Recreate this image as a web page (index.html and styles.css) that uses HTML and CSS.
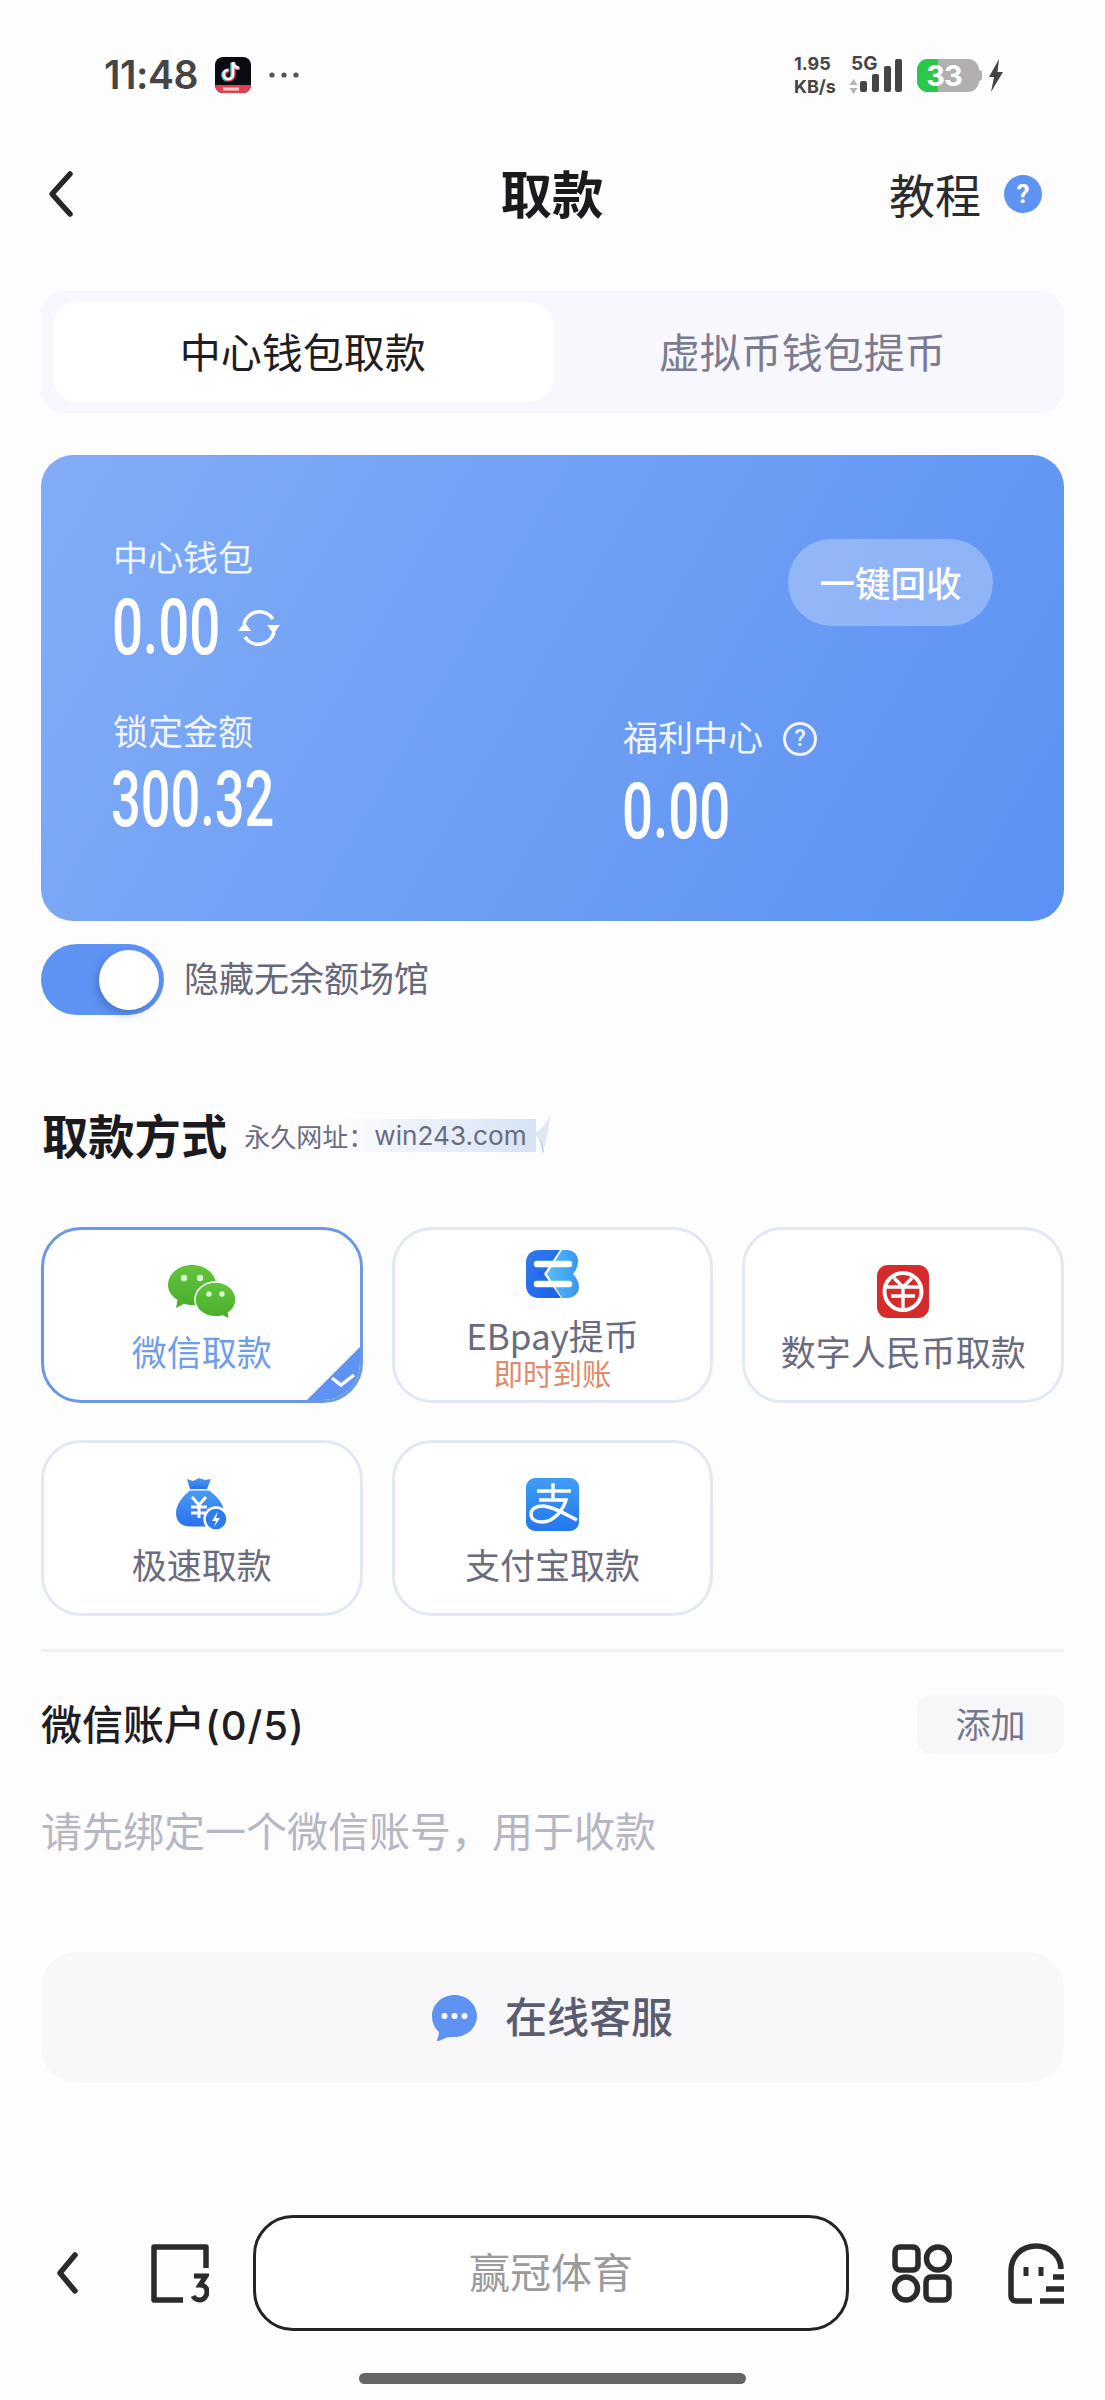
FILE: index.html
```html
<!DOCTYPE html>
<html lang="zh-CN">
<head>
<meta charset="utf-8">
<title>取款</title>
<link rel="stylesheet" href="styles.css">
</head>
<body>
<div class="page">
  <header class="status">
    <div class="status-left">
      <span class="time">11:48</span>
      <svg class="tiktok" viewBox="0 0 36 36"><defs><clipPath id="tk"><rect width="36" height="36" rx="8"/></clipPath></defs><g clip-path="url(#tk)"><rect width="36" height="36" fill="#0b0b12"/><rect y="28" width="36" height="8" fill="#e0404f"/><rect x="8" y="30.5" width="16" height="3" fill="#f7c9c9"/></g><g fill="none" stroke-width="3.4"><path d="M18 5v12.5a4.6 4.6 0 1 1-4.6-4.6M18 5c.4 3.4 2.8 5.600 6 6" stroke="#2ad4dc" transform="translate(-1 .6)"/><path d="M18 5v12.5a4.6 4.6 0 1 1-4.6-4.6M18 5c.4 3.4 2.8 5.600 6 6" stroke="#f0305a" transform="translate(1 .6)"/><path d="M18 5v12.5a4.6 4.6 0 1 1-4.6-4.6M18 5c.4 3.4 2.8 5.600 6 6" stroke="#fff" stroke-width="2.6"/></g></svg>
      <svg class="dots" viewBox="0 0 30 6"><circle cx="3" cy="3" r="2.6"/><circle cx="15" cy="3" r="2.6"/><circle cx="27" cy="3" r="2.6"/></svg>
    </div>
    <div class="status-right">
      <div class="net"><span>1.95</span><span class="net-5g">5G</span><span>KB/s</span><svg class="updown" viewBox="0 0 9 15"><path d="M4.500 0l4 6H.5zM4.500 15l4-6H.5z"/></svg></div>
      <svg class="signal" viewBox="0 0 42 33"><rect x="0" y="22" width="7" height="11" rx="2"/><rect x="12" y="15" width="7" height="18" rx="2"/><rect x="24" y="7" width="7" height="26" rx="2"/><rect x="35" y="0" width="7" height="33" rx="2"/></svg>
      <div class="battery"><div class="battery-level"></div><span class="battery-num">33</span></div>
      <svg class="bolt" viewBox="0 0 15 33"><path d="M11 0L1 18h5l-3 15L15 13H9.500z"/></svg>
    </div>
  </header>

  <nav class="nav">
    <svg class="nav-back" viewBox="0 0 27 48"><path d="M23 4L5 24l18 20" /></svg>
    <h1 class="nav-title">取款</h1>
    <div class="nav-help"><span class="nav-help-text">教程</span><span class="q-badge">?</span></div>
  </nav>

  <div class="tabs">
    <div class="tab tab-active">中心钱包取款</div>
    <div class="tab">虚拟币钱包提币</div>
  </div>

  <section class="wallet">
    <div class="wallet-cell">
      <div class="wallet-label">中心钱包</div>
      <div class="value-row">
        <span class="num num-short">0.00</span>
        <svg class="refresh" viewBox="0 0 44 44"><path d="M7 18a16 16 0 0 1 29-5M37 26a16 16 0 0 1-29 5" fill="none" stroke="#fff" stroke-width="3.6"/><path d="M30 19h13l-6.500 9zM1 25h13l-6.500-9z" fill="#fff"/></svg>
      </div>
    </div>
    <div class="wallet-cell wallet-action"><div class="recycle">一键回收</div></div>
    <div class="wallet-cell wallet-locked">
      <div class="wallet-label">锁定金额</div>
      <div class="num num-long">300.32</div>
    </div>
    <div class="wallet-cell wallet-welfare">
      <div class="wallet-label label-q">福利中心<span class="q-outline">?</span></div>
      <div class="num num-short">0.00</div>
    </div>
  </section>

  <div class="hide-row">
    <div class="toggle"><div class="knob"></div></div>
    <span class="hide-text">隐藏无余额场馆</span>
  </div>

  <div class="method-head">
    <h2 class="method-title">取款方式</h2>
    <div class="ribbon">永久网址：<span class="ribbon-url">win243.com</span>
      <svg class="curl" viewBox="0 0 18 42"><path d="M17 0C15 8 11 14 1 21c5 3 8 9 8 17 4-6 7-20 8-38z" fill="#dfe8f4"/><path d="M1 21c5 3 8 9 8 17l2 2c-1-9-4-16-10-19z" fill="#b9cbe2"/></svg>
    </div>
  </div>

  <div class="methods">
    <div class="method method-selected">
      <svg class="m-icon" width="68" height="55" viewBox="0 0 68 55"><defs><linearGradient id="wg" x1="0" y1="0" x2="0" y2="1"><stop offset="0" stop-color="#62c53c"/><stop offset="1" stop-color="#4aad2b"/></linearGradient></defs><path d="M24 0c13 0 24 8.500 24 20s-11 20-24 20c-3 0-5-.3-8-1.200L8 43l1.500-8C3.500 31 0 26 0 20 0 8.500 11 0 24 0z" fill="url(#wg)"/><circle cx="16" cy="13" r="3.200" fill="#dff5d2"/><circle cx="32" cy="13" r="3.200" fill="#dff5d2"/><path d="M47.500 17C59 17 68 24.800 68 34.500c0 5.500-3 10.300-7.500 13.500l1 6.500-6.800-3.500c-2.300.6-4.700.9-7.200.9-11.500 0-20.500-7.600-20.500-17.400S36 17 47.500 17z" fill="url(#wg)" stroke="#fff" stroke-width="1.600"/><circle cx="41" cy="29" r="2.700" fill="#dff5d2"/><circle cx="54" cy="29" r="2.700" fill="#dff5d2"/></svg>
      <div class="m-label m-label-active">微信取款</div>
      <svg class="corner" viewBox="0 0 53 53"><path d="M53 0v53H0z" fill="#5f93f3"/><path d="M25 31l9 7 13-10" fill="none" stroke="#fff" stroke-width="3.400"/></svg>
    </div>
    <div class="method method-tall">
      <svg class="m-icon" width="53" height="48" viewBox="0 0 53 48"><defs><linearGradient id="eb" x1="0" y1="0" x2="1" y2="1"><stop offset="0" stop-color="#2d7cf0"/><stop offset="1" stop-color="#1f5fe8"/></linearGradient><linearGradient id="eb2" x1="0" y1="0" x2="1" y2="0"><stop offset="0" stop-color="#58bdf6"/><stop offset="1" stop-color="#3596f0"/></linearGradient></defs><path d="M13 0h21L18 24l17 24H13C5 48 0 43 0 35V13C0 5 5 0 13 0z" fill="url(#eb)"/><path d="M36 0h5c7 0 11 5 11 11 0 5-1.500 9-5 13 3.500 4 6 8 6 13 0 6-5 11-12 11h-5L21 24z" fill="url(#eb2)"/><path d="M11 14h32M11 34h32" stroke="#fff" stroke-width="6.500" fill="none" stroke-linecap="round"/><path d="M12 24h6" stroke="#2468ee" stroke-width="6" fill="none"/></svg>
      <div class="m-label m-label-tall">EBpay提币</div>
      <div class="m-sub">即时到账</div>
    </div>
    <div class="method">
      <svg class="m-icon" width="52" height="53" viewBox="0 0 52 53"><rect width="52" height="53" rx="11" fill="#d42b2b"/><circle cx="26" cy="26.500" r="18.500" fill="none" stroke="#fff" stroke-width="4"/><path d="M17 13l9 9 9-9M10 22h32M14 31h24M26 22v22" fill="none" stroke="#fff" stroke-width="3.400"/></svg>
      <div class="m-label">数字人民币取款</div>
    </div>
    <div class="method">
      <svg class="m-icon" width="52" height="53" viewBox="0 0 52 53"><defs><linearGradient id="bag" x1="0" y1="0" x2="0" y2="1"><stop offset="0" stop-color="#4a9bf2"/><stop offset="1" stop-color="#2a70ef"/></linearGradient></defs><path d="M11 1l6 2 6-3 6 2 6-1-4 10H14z" fill="url(#bag)"/><path d="M14 12.500h19c7 5 15 13 15 22 0 9-5 14-15 14H14C5 48.500 0 43 0 35c0-9 7-17 14-22.500z" fill="url(#bag)"/><path d="M16 19l7 8 7-8M15 29h16M15 35h16M23 27v13" fill="none" stroke="#fff" stroke-width="3"/><circle cx="40" cy="41" r="11.500" fill="#2a7df0" stroke="#fff" stroke-width="2.500"/><path d="M42 33l-6 10h4l-2 6 6-9h-4z" fill="#fff"/></svg>
      <div class="m-label">极速取款</div>
    </div>
    <div class="method">
      <svg class="m-icon" width="53" height="53" viewBox="0 0 53 53"><defs><linearGradient id="ali" x1="0" y1="0" x2="0" y2="1"><stop offset="0" stop-color="#3f9df5"/><stop offset="1" stop-color="#2577ee"/></linearGradient><clipPath id="alic"><rect width="53" height="53" rx="9"/></clipPath></defs><rect width="53" height="53" rx="9" fill="url(#ali)"/><g clip-path="url(#alic)" fill="none" stroke="#fff" stroke-width="3.400"><path d="M11 13h34M27 5v16M13 22h27c-3 10-12 22-24 22-7 0-11-3-11-8 0-5 5-8 12-8 9 0 22 8 34 14"/></g></svg>
      <div class="m-label">支付宝取款</div>
    </div>
  </div>

  <div class="divider"></div>

  <div class="account-head">
    <div class="account-title">微信账户<span class="account-count">(0/5)</span></div>
    <div class="add-btn">添加</div>
  </div>
  <p class="account-empty">请先绑定一个微信账号，用于收款</p>

  <div class="support">
    <svg class="support-icon" viewBox="0 0 45 47"><path d="M22.500 1C35 1 45 10.500 45 22S35 43 22.500 43c-4 0-6 0-8 .5C11 45 8 47 5.500 47 4 47 7 42 7 38 2.500 34 0 28.500 0 22 0 10.500 10 1 22.500 1z" fill="#5f93f3"/><circle cx="12.500" cy="22" r="3" fill="#fff"/><circle cx="22.500" cy="22" r="3" fill="#fff"/><circle cx="32.500" cy="22" r="3" fill="#fff"/></svg>
    <span class="support-text">在线客服</span>
  </div>

  <div class="browser-bar">
    <svg class="b-back" viewBox="0 0 22 42"><path d="M19 3L4 21l15 18"/></svg>
    <svg class="b-tabs" viewBox="0 0 58 59"><path d="M32 56H3V3h52v21" fill="none" stroke="#2b2b2b" stroke-width="5.500" stroke-linejoin="round"/><path d="M43 32h12l-6 9c4 0 7 2.500 7 6.500S53 56 49 56s-6-2-7-4" fill="none" stroke="#2b2b2b" stroke-width="5"/></svg>
    <div class="b-pill">赢冠体育</div>
    <svg class="b-apps" viewBox="0 0 60 59"><g fill="none" stroke="#2b2b2b" stroke-width="5.500"><rect x="3" y="3" width="23" height="23" rx="5"/><circle cx="46" cy="14.500" r="11.500"/><circle cx="14" cy="44.500" r="11.500"/><rect x="34" y="33" width="23" height="23" rx="5"/></g></svg>
    <svg class="b-ghost" viewBox="0 0 56 61"><g fill="none" stroke="#2b2b2b" stroke-width="5.500"><path d="M24 58H8c-3 0-5-2-5-5V28C3 13 14 3 28 3s25 10 25 23"/><path d="M18 24v9M33 24v9" stroke-width="5"/><path d="M45 34h11M38 46h18M32 58h24"/></g></svg>
  </div>
  <div class="home-indicator"></div>
</div>
</body>
</html>
```

FILE: styles.css
```css
* { box-sizing: border-box; }
html, body { margin: 0; padding: 0; }
body {
  background: #fdfdfe;
  color: #1c1c22;
  font-family: "Noto Sans CJK SC", "Noto Sans", sans-serif;
}
h1, h2, p { margin: 0; font-weight: inherit; font-size: inherit; }
.page { width: 1105px; height: 2400px; padding: 0 41px; overflow: hidden; }

/* status bar */
.status { height: 150px; margin: 0 -41px; padding: 0 102px 0 104px; display: flex; justify-content: space-between; align-items: center; }
.status-left { display: flex; align-items: center; }
.time { font-family: Inter, Roboto, sans-serif; font-weight: 600; font-size: 39px; line-height: 44px; color: #454545; letter-spacing: -.5px; }
.tiktok { width: 36px; height: 36px; margin-left: 17px; }
.dots { width: 30px; height: 6px; margin-left: 18px; fill: #555; }
.status-right { display: flex; align-items: center; color: #454545; }
.net { display: grid; grid-template-columns: 46px 28px; column-gap: 7px; row-gap: 6px; font-family: Inter, Roboto, sans-serif; font-weight: 700; font-size: 18px; line-height: 17px; justify-items: start; align-items: center; }
.net-5g { font-size: 19px; margin-left: 4px; }
.updown { width: 9px; height: 15px; fill: #b5b5b5; margin-left: 2px; }
.signal { width: 42px; height: 33px; margin-left: -15px; fill: #454545; }
.battery { position: relative; width: 62px; height: 33px; margin: 0 3px 0 15px; background: #b0b0b0; border-radius: 11px; display: flex; align-items: center; justify-content: center; padding-right: 8px; }
.battery::after { content: ""; position: absolute; right: -3px; top: 11px; width: 3px; height: 11px; border-radius: 0 3px 3px 0; background: #b0b0b0; }
.battery-level { position: absolute; left: 0; top: 0; bottom: 0; width: 21px; background: #2cc84a; border-radius: 11px 0 0 11px; }
.battery-num { position: relative; font-family: Inter, Roboto, sans-serif; font-weight: 700; font-size: 29px; line-height: 33px; letter-spacing: -1px; color: #fff; }
.bolt { width: 15px; height: 33px; margin-left: 6px; fill: #454545; }

/* nav */
.nav { height: 88px; display: flex; align-items: center; position: relative; justify-content: space-between; }
.nav-back { width: 27px; height: 48px; margin-left: 6px; fill: none; stroke: #26262b; stroke-width: 5.500; stroke-linecap: round; stroke-linejoin: round; }
.nav-title { position: absolute; left: 0; right: 0; top: 7px; text-align: center; padding-right: 1px; font-size: 51.500px; line-height: 70px; font-weight: 700; color: #1a1a1f; }
.nav-help { display: flex; align-items: center; color: #2b2b30; margin-right: 22px; }
.nav-help-text { font-size: 46px; line-height: 60px; padding-bottom: 3px; }
.q-badge { width: 38px; height: 38px; margin-left: 23px; border-radius: 50%; background: #5f93f3; color: #fff; font-family: Roboto, sans-serif; font-weight: 700; font-size: 26px; line-height: 38px; text-align: center; }

/* tabs */
.tabs { margin-top: 53px; height: 122px; padding: 11px 12px; display: flex; background: #f7f7fd; border-radius: 24px; }
.tab { flex: 1; display: flex; align-items: center; justify-content: center; padding-bottom: 5px; font-size: 41px; line-height: 56px; color: #7b7b91; border-radius: 24px; }
.tab-active { background: #fff; color: #1d1d22; }

/* wallet */
.wallet { margin-top: 42px; height: 466px; padding: 81px 71px 0 72px; display: grid; grid-template-columns: 510px 1fr; grid-template-rows: 174px 1fr; border-radius: 32px; background: linear-gradient(120deg, #82acf6 0%, #6e9ff5 50%, #5c91f3 100%); color: #fff; }
.wallet-label { font-size: 35px; line-height: 40px; color: #f1f5fe; }
.value-row { display: flex; align-items: center; margin-top: 17px; }
.num { font-family: Roboto, sans-serif; font-weight: 500; font-size: 77px; line-height: 70px; height: 70px; white-space: nowrap; transform: scaleX(.71); transform-origin: left center; color: #fff; }
.num-short { width: 107px; margin-left: -1px; }
.num-long { width: 163px; margin-left: -2px; transform: scaleX(.68); }
.refresh { width: 44px; height: 44px; margin-left: 18px; }
.wallet-action { display: flex; justify-content: flex-end; align-items: flex-start; padding-top: 3px; }
.recycle { width: 205px; height: 87px; border-radius: 44px; background: rgba(255,255,255,.28); font-size: 35.500px; font-weight: 500; line-height: 85px; text-align: center; color: #fff; }
.wallet-locked .num { margin-top: 15px; }
.wallet-welfare { padding-top: 6px; }
.wallet-welfare .num { margin-top: 21px; }
.label-q { display: flex; align-items: center; }
.q-outline { width: 34px; height: 34px; margin: 5px 0 0 20px; border: 3px solid #f1f5fe; border-radius: 50%; font-family: Roboto, sans-serif; font-size: 23px; line-height: 28px; text-align: center; font-weight: 500; }

/* toggle */
.hide-row { margin-top: 23px; height: 71px; display: flex; align-items: center; }
.toggle { width: 123px; height: 71px; padding: 6px 5px 5px 58px; border-radius: 36px; background: #5f93f3; }
.knob { width: 60px; height: 60px; border-radius: 50%; background: #fff; box-shadow: -3px 4px 8px rgba(40,70,130,.35); }
.hide-text { margin: 0 0 5px 20px; font-size: 35px; line-height: 50px; color: #67677b; }

/* methods */
.method-head { margin-top: 90px; height: 60px; display: flex; align-items: center; }
.method-title { margin: 0 0 3px 1px; font-size: 46.300px; line-height: 60px; font-weight: 700; color: #1a1a1f; }
.ribbon { position: relative; margin-left: 17px; height: 33px; width: 292px; display: flex; align-items: center; font-size: 26px; line-height: 33px; color: #6c6c80; background: linear-gradient(90deg, rgba(214,227,243,0) 30%, #d6e3f3 100%); white-space: nowrap; }
.ribbon-url { font-family: Inter, Roboto, sans-serif; font-size: 26.200px; margin-left: 0; }
.curl { position: absolute; right: -15px; top: -6px; width: 18px; height: 42px; }
.methods { margin-top: 62px; display: grid; grid-template-columns: repeat(3, 1fr); grid-auto-rows: 176px; column-gap: 29px; row-gap: 37px; }
.method { position: relative; display: flex; flex-direction: column; align-items: center; padding-top: 35px; background: #fff; border: 3px solid #e2e9f5; border-radius: 40px; overflow: hidden; }
.method-selected { border-color: #6b98e2; }
.method-tall { padding-top: 20px; }
.m-icon { flex: none; }
.m-label { margin-top: 12px; font-size: 35px; line-height: 42px; color: #6b6b80; white-space: nowrap; }
.m-label-active { color: #6f9de7; margin-top: 10px; }
.m-label-tall { margin-top: 16px; }
.m-sub { font-size: 29.500px; line-height: 34px; margin-top: -1px; color: #e0896c; }
.corner { position: absolute; right: 0; bottom: 0; width: 53px; height: 53px; }

/* accounts */
.divider { margin-top: 33px; height: 3px; background: #f1f1f5; }
.account-head { margin-top: 43px; height: 59px; display: flex; align-items: center; justify-content: space-between; }
.account-title { margin: 0 0 2px 0; font-size: 41px; line-height: 54px; font-weight: 500; color: #1e1e24; }
.account-count { font-family: Inter, Roboto, sans-serif; font-size: 40px; letter-spacing: 1px; }
.add-btn { width: 147px; height: 59px; border-radius: 14px; background: #f7f7fa; font-size: 35px; line-height: 56px; text-align: center; color: #77778b; }
.account-empty { margin-top: 45px; height: 60px; font-size: 41px; line-height: 60px; color: #b6b6c4; white-space: nowrap; }

/* support */
.support { margin-top: 93px; height: 131px; display: flex; align-items: center; justify-content: center; border-radius: 36px; background: #f8f8fb; }
.support-icon { width: 45px; height: 47px; }
.support-text { margin: 0 0 5px 28px; font-size: 42px; line-height: 60px; font-weight: 500; color: #5c5c70; }

/* browser bar */
.browser-bar { margin-top: 132px; height: 116px; display: flex; align-items: center; }
.b-back { width: 22px; height: 42px; margin-left: 15px; fill: none; stroke: #2b2b2b; stroke-width: 5.500; stroke-linecap: round; stroke-linejoin: round; }
.b-tabs { width: 58px; height: 59px; margin-left: 73px; }
.b-pill { width: 596px; height: 116px; margin-left: 44px; border: 3px solid #242424; border-radius: 40px; background: #fff; font-size: 41px; line-height: 105px; text-align: center; color: #9b9b9b; }
.b-apps { width: 60px; height: 59px; margin-left: 43px; }
.b-ghost { width: 56px; height: 61px; margin-left: 56px; flex: none; }
.home-indicator { width: 387px; height: 11px; margin: 42px 0 0 318px; border-radius: 6px; background: #666; }
```
